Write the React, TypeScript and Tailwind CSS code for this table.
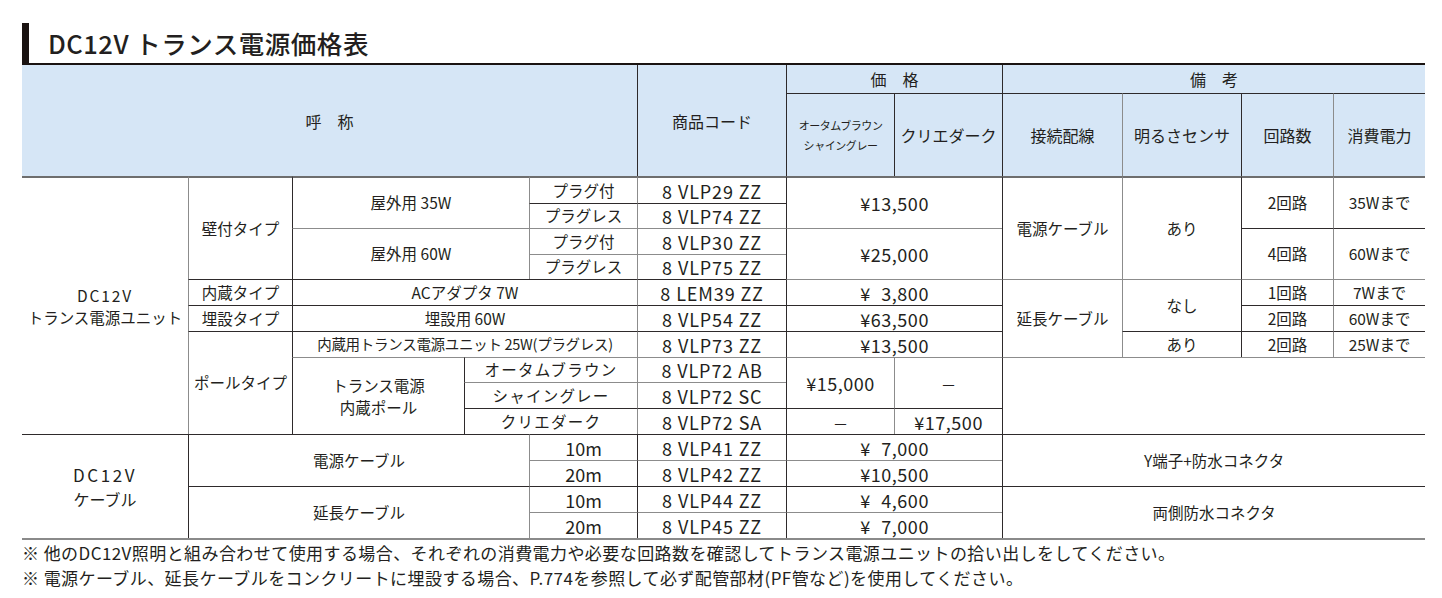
import React from "react";

type CellProps = {
  children?: React.ReactNode;
  t?: "d" | "g" | "none";
  l?: "d" | "g" | "none";
  colSpan?: number;
  rowSpan?: number;
  className?: string;
};

function Cell({ children, t = "d", l = "d", colSpan, rowSpan, className = "" }: CellProps) {
  const top =
    t === "d" ? "border-t border-t-[#2e2a2b]" : t === "g" ? "border-t border-t-[#8c8c8c]" : "";
  const left =
    l === "d" ? "border-l border-l-[#2e2a2b]" : l === "g" ? "border-l border-l-[#8c8c8c]" : "";
  return (
    <td
      colSpan={colSpan}
      rowSpan={rowSpan}
      className={`p-0 text-center align-middle ${top} ${left} ${className}`}
    >
      {children}
    </td>
  );
}

function Yen({ v, pad }: { v: string; pad?: boolean }) {
  return (
    <span>
      ¥{pad && <span className="invisible">0</span>}
      {v}
    </span>
  );
}

const head = "bg-[#d6e6f6] text-[16px]";
const code = "text-[18px] tracking-[0.05em]";
const price = "text-[18px] tracking-[0.03em]";
const len = "text-[18px]";
const sep = "border-t-2 border-t-[#6e6e6e]";

function Dash() {
  return <span className="text-[14px]">—</span>;
}

export default function App() {
  return (
    <div className="min-h-screen bg-white pl-[22px] pr-[17px] pt-[23px] text-[#231f20] font-['Noto_Sans_CJK_JP',sans-serif]">
      <div className="flex h-[40px] items-center">
        <div className="h-full w-[7px] bg-[#1a1311]" />
        <h1 className="ml-[19px] text-[25.5px] font-medium leading-[40px] tracking-[0.02em]">
          DC12V トランス電源価格表
        </h1>
      </div>

      <div className="border-t-2 border-b-2 border-t-[#1a1311] border-b-[#8a8a8a]">
        <table className="w-[1403px] table-fixed border-separate border-spacing-0 text-[15.5px] leading-none">
          <colgroup>
            <col className="w-[166px]" />
            <col className="w-[104px]" />
            <col className="w-[172px]" />
            <col className="w-[65px]" />
            <col className="w-[108px]" />
            <col className="w-[149px]" />
            <col className="w-[108px]" />
            <col className="w-[108px]" />
            <col className="w-[120px]" />
            <col className="w-[119px]" />
            <col className="w-[92px]" />
            <col className="w-[92px]" />
          </colgroup>
          <thead>
            <tr className="h-[28px]">
              <Cell colSpan={5} rowSpan={2} t="none" l="none" className={head}>
                呼　称
              </Cell>
              <Cell rowSpan={2} t="none" l="d" className={head}>
                商品コード
              </Cell>
              <Cell colSpan={2} t="none" l="d" className={head}>
                価　格
              </Cell>
              <Cell colSpan={4} t="none" l="d" className={head}>
                備　考
              </Cell>
            </tr>
            <tr className="h-[83px]">
              <Cell t="d" l="d" className={`${head} !text-[11px] leading-[20px] tracking-[-0.04em]`}>
                オータムブラウン
                <br />
                シャイングレー
              </Cell>
              <Cell t="d" l="d" className={head}>
                クリエダーク
              </Cell>
              <Cell t="d" l="d" className={head}>
                接続配線
              </Cell>
              <Cell t="d" l="g" className={head}>
                明るさセンサ
              </Cell>
              <Cell t="d" l="d" className={head}>
                回路数
              </Cell>
              <Cell t="d" l="g" className={head}>
                消費電力
              </Cell>
            </tr>
          </thead>
          <tbody>
            {/* row 1 */}
            <tr className="h-[27px]">
              <Cell rowSpan={10} t="none" l="none" className={`${sep} leading-[22px]`}>
                <span className="tracking-[0.12em]">DC12V</span>
                <br />
                トランス電源ユニット
              </Cell>
              <Cell rowSpan={4} t="none" l="g" className={sep}>
                壁付タイプ
              </Cell>
              <Cell rowSpan={2} colSpan={2} t="none" l="d" className={sep}>
                屋外用 35W
              </Cell>
              <Cell t="none" l="g" className={sep}>
                プラグ付
              </Cell>
              <Cell t="none" l="g" className={`${sep} ${code}`}>
                8 VLP29 ZZ
              </Cell>
              <Cell rowSpan={2} colSpan={2} t="none" l="d" className={`${sep} ${price}`}>
                <Yen v="13,500" />
              </Cell>
              <Cell rowSpan={4} t="none" l="d" className={sep}>
                電源ケーブル
              </Cell>
              <Cell rowSpan={4} t="none" l="g" className={sep}>
                あり
              </Cell>
              <Cell rowSpan={2} t="none" l="d" className={sep}>
                2回路
              </Cell>
              <Cell rowSpan={2} t="none" l="g" className={sep}>
                35Wまで
              </Cell>
            </tr>
            {/* row 2 */}
            <tr className="h-[25px]">
              <Cell t="d" l="g">プラグレス</Cell>
              <Cell t="d" l="g" className={code}>8 VLP74 ZZ</Cell>
            </tr>
            {/* row 3 */}
            <tr className="h-[26px]">
              <Cell rowSpan={2} colSpan={2} t="g" l="d">屋外用 60W</Cell>
              <Cell t="g" l="g">プラグ付</Cell>
              <Cell t="g" l="g" className={code}>8 VLP30 ZZ</Cell>
              <Cell rowSpan={2} colSpan={2} t="g" l="d" className={price}>
                <Yen v="25,000" />
              </Cell>
              <Cell rowSpan={2} t="d" l="d">4回路</Cell>
              <Cell rowSpan={2} t="d" l="g">60Wまで</Cell>
            </tr>
            {/* row 4 */}
            <tr className="h-[25px]">
              <Cell t="g" l="g">プラグレス</Cell>
              <Cell t="g" l="g" className={code}>8 VLP75 ZZ</Cell>
            </tr>
            {/* row 5 */}
            <tr className="h-[26px]">
              <Cell t="d" l="g">内蔵タイプ</Cell>
              <Cell colSpan={3} t="d" l="d">ACアダプタ 7W</Cell>
              <Cell t="d" l="g" className={code}>8 LEM39 ZZ</Cell>
              <Cell colSpan={2} t="g" l="d" className={price}>
                <Yen v="3,800" pad />
              </Cell>
              <Cell rowSpan={3} t="g" l="d">延長ケーブル</Cell>
              <Cell rowSpan={2} t="g" l="g">なし</Cell>
              <Cell t="g" l="d">1回路</Cell>
              <Cell t="g" l="g">7Wまで</Cell>
            </tr>
            {/* row 6 */}
            <tr className="h-[26px]">
              <Cell t="d" l="g">埋設タイプ</Cell>
              <Cell colSpan={3} t="d" l="d">埋設用 60W</Cell>
              <Cell t="d" l="g" className={code}>8 VLP54 ZZ</Cell>
              <Cell colSpan={2} t="d" l="d" className={price}>
                <Yen v="63,500" />
              </Cell>
              <Cell t="d" l="d">2回路</Cell>
              <Cell t="d" l="g">60Wまで</Cell>
            </tr>
            {/* row 7 */}
            <tr className="h-[26px]">
              <Cell rowSpan={4} t="d" l="g">ポールタイプ</Cell>
              <Cell colSpan={3} t="d" l="d" className="text-[14.5px] tracking-[-0.02em]">
                内蔵用トランス電源ユニット 25W(プラグレス)
              </Cell>
              <Cell t="d" l="g" className={code}>8 VLP73 ZZ</Cell>
              <Cell colSpan={2} t="d" l="d" className={price}>
                <Yen v="13,500" />
              </Cell>
              <Cell t="d" l="g">あり</Cell>
              <Cell t="d" l="d">2回路</Cell>
              <Cell t="d" l="g">25Wまで</Cell>
            </tr>
            {/* row 8 */}
            <tr className="h-[25px]">
              <Cell rowSpan={3} t="g" l="d" className="leading-[22px]">
                トランス電源
                <br />
                内蔵ポール
              </Cell>
              <Cell colSpan={2} t="g" l="d" className="tracking-[0.08em]">オータムブラウン</Cell>
              <Cell t="g" l="g" className={code}>8 VLP72 AB</Cell>
              <Cell rowSpan={2} t="g" l="d" className={price}>
                <Yen v="15,000" />
              </Cell>
              <Cell rowSpan={2} t="g" l="g"><Dash /></Cell>
              <Cell rowSpan={3} colSpan={4} t="g" l="d" />
            </tr>
            {/* row 9 */}
            <tr className="h-[26px]">
              <Cell colSpan={2} t="g" l="d" className="tracking-[0.08em]">シャイングレー</Cell>
              <Cell t="g" l="g" className={code}>8 VLP72 SC</Cell>
            </tr>
            {/* row 10 */}
            <tr className="h-[26px]">
              <Cell colSpan={2} t="d" l="d" className="tracking-[0.08em]">クリエダーク</Cell>
              <Cell t="d" l="g" className={code}>8 VLP72 SA</Cell>
              <Cell t="d" l="d"><Dash /></Cell>
              <Cell t="d" l="g" className={price}>
                <Yen v="17,500" />
              </Cell>
            </tr>

            {/* cable rows */}
            <tr className="h-[26px]">
              <Cell rowSpan={4} t="d" l="none" className="text-[16px] leading-[24px]">
                <span className="text-[17px] tracking-[0.15em]">DC12V</span>
                <br />
                ケーブル
              </Cell>
              <Cell rowSpan={2} colSpan={3} t="d" l="d">電源ケーブル</Cell>
              <Cell t="d" l="g" className={len}>10m</Cell>
              <Cell t="d" l="d" className={code}>8 VLP41 ZZ</Cell>
              <Cell colSpan={2} t="d" l="d" className={price}>
                <Yen v="7,000" pad />
              </Cell>
              <Cell rowSpan={2} colSpan={4} t="d" l="d">Y端子+防水コネクタ</Cell>
            </tr>
            <tr className="h-[26px]">
              <Cell t="g" l="g" className={len}>20m</Cell>
              <Cell t="g" l="d" className={code}>8 VLP42 ZZ</Cell>
              <Cell colSpan={2} t="g" l="d" className={price}>
                <Yen v="10,500" />
              </Cell>
            </tr>
            <tr className="h-[26px]">
              <Cell rowSpan={2} colSpan={3} t="d" l="d">延長ケーブル</Cell>
              <Cell t="d" l="g" className={len}>10m</Cell>
              <Cell t="d" l="d" className={code}>8 VLP44 ZZ</Cell>
              <Cell colSpan={2} t="d" l="d" className={price}>
                <Yen v="4,600" pad />
              </Cell>
              <Cell rowSpan={2} colSpan={4} t="d" l="d">両側防水コネクタ</Cell>
            </tr>
            <tr className="h-[26px]">
              <Cell t="g" l="g" className={len}>20m</Cell>
              <Cell t="g" l="d" className={code}>8 VLP45 ZZ</Cell>
              <Cell colSpan={2} t="g" l="d" className={price}>
                <Yen v="7,000" pad />
              </Cell>
            </tr>
          </tbody>
        </table>
      </div>

      <div className="text-[17px] leading-[25px] tracking-[0.025em]">
        <p>※ 他のDC12V照明と組み合わせて使用する場合、それぞれの消費電力や必要な回路数を確認してトランス電源ユニットの拾い出しをしてください。</p>
        <p>※ 電源ケーブル、延長ケーブルをコンクリートに埋設する場合、P.774を参照して必ず配管部材(PF管など)を使用してください。</p>
      </div>
    </div>
  );
}
